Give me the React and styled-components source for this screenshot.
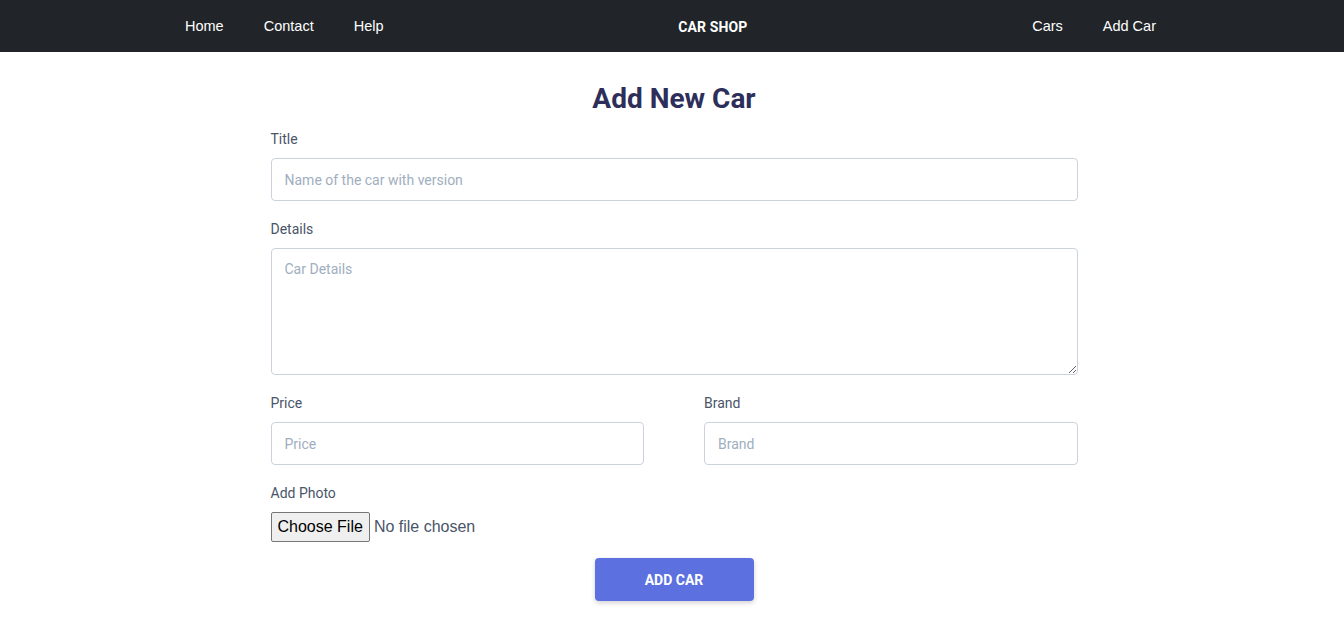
import React from "react";
import styled, { createGlobalStyle } from "styled-components";

const GlobalStyle = createGlobalStyle`
  body {
    margin: 0;
    background: #ffffff;
    font-family: Roboto, "Liberation Sans", sans-serif;
  }
  * { box-sizing: border-box; }
`;

const NavBar = styled.nav`
  height: 52px;
  background-color: #212529;
  display: flex;
  align-items: center;
  justify-content: space-between;
  padding: 0 168px 0 165px;
`;

const NavGroup = styled.div`
  display: flex;
`;

const NavLink = styled.a`
  font-family: "Liberation Sans", Arial, sans-serif;
  font-size: 14.5px;
  color: #ffffff;
  text-decoration: none;
  padding: 0 20px;
`;

const Brand = styled.div`
  font-family: Roboto, sans-serif;
  font-weight: 700;
  font-size: 14px;
  color: #ffffff;
  letter-spacing: 0.1px;
  padding-top: 1px;
  margin-left: 10px;
`;

const Page = styled.div`
  padding-left: 4px;
`;

const Main = styled.main`
  width: 807px;
  margin: 0 auto;
  padding: 30px 0 20px;
  display: flex;
  flex-direction: column;
`;

const Heading = styled.h1`
  margin: 0 0 16px;
  text-align: center;
  font-family: Roboto, sans-serif;
  font-weight: 700;
  font-size: 28px;
  line-height: 33px;
  color: #2d2f5a;
`;

const Field = styled.div`
  display: flex;
  flex-direction: column;
  flex: 1;
  margin-bottom: 20px;
`;

const Row = styled.div`
  display: flex;
  gap: 60px;
`;

const Label = styled.label`
  font-size: 14px;
  line-height: 17px;
  color: #4a5568;
  margin-bottom: 10px;
`;

const TextInput = styled.input`
  height: 43px;
  border: 1px solid #cbd2dc;
  border-radius: 4px;
  padding: 0 13px;
  font-family: Roboto, sans-serif;
  font-size: 14px;
  color: #2d3748;
  outline: none;
  &::placeholder { color: #a0aec0; }
`;

const TextArea = styled.textarea`
  height: 127px;
  border: 1px solid #cbd2dc;
  border-radius: 4px;
  padding: 12px 13px;
  font-family: Roboto, sans-serif;
  font-size: 14px;
  color: #2d3748;
  outline: none;
  resize: vertical;
  &::placeholder { color: #a0aec0; }
`;

const FileInput = styled.input`
  font-family: "Liberation Sans", Arial, sans-serif;
  font-size: 16px;
  color: #4a5568;
  &::file-selector-button {
    font-family: "Liberation Sans", Arial, sans-serif;
    font-size: 16px;
    color: #000;
    background: #efefef;
    border: 1px solid #767676;
    border-radius: 2px;
    padding: 5px 6px;
    margin-right: 4px;
  }
`;

const PhotoField = styled(Field)`
  margin-bottom: 16px;
`;

const SubmitButton = styled.button`
  align-self: center;
  width: 159px;
  height: 43px;
  border: none;
  border-radius: 4px;
  background-color: #5d70e0;
  color: #ffffff;
  font-family: Roboto, sans-serif;
  font-weight: 700;
  font-size: 14px;
  text-transform: uppercase;
  box-shadow: 0 2px 5px rgba(0, 0, 0, 0.18);
  cursor: pointer;
`;

export default function App() {
  return (
    <>
      <GlobalStyle />
      <NavBar>
        <NavGroup>
          <NavLink href="#">Home</NavLink>
          <NavLink href="#">Contact</NavLink>
          <NavLink href="#">Help</NavLink>
        </NavGroup>
        <Brand>CAR SHOP</Brand>
        <NavGroup>
          <NavLink href="#">Cars</NavLink>
          <NavLink href="#">Add Car</NavLink>
        </NavGroup>
      </NavBar>
      <Page>
        <Main>
          <Heading>Add New Car</Heading>
          <Field>
            <Label>Title</Label>
            <TextInput placeholder="Name of the car with version" />
          </Field>
          <Field>
            <Label>Details</Label>
            <TextArea placeholder="Car Details" />
          </Field>
          <Row>
            <Field>
              <Label>Price</Label>
              <TextInput placeholder="Price" />
            </Field>
            <Field>
              <Label>Brand</Label>
              <TextInput placeholder="Brand" />
            </Field>
          </Row>
          <PhotoField>
            <Label>Add Photo</Label>
            <FileInput type="file" />
          </PhotoField>
          <SubmitButton>Add Car</SubmitButton>
        </Main>
      </Page>
    </>
  );
}
